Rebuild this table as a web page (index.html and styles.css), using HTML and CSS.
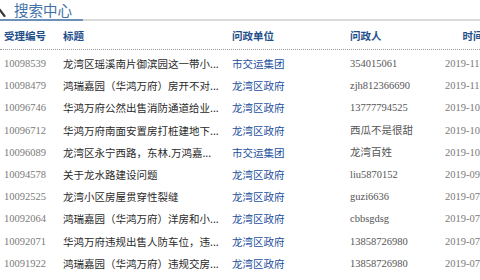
FILE: index.html
```html
<!DOCTYPE html>
<html lang="zh-CN">
<head>
<meta charset="utf-8">
<link rel="stylesheet" href="styles.css">
</head>
<body>
<div class="page">
  <div class="head">
    <svg class="icon" width="6" height="19" viewBox="0 0 6 19"><line x1="-0.5" y1="9.5" x2="4.5" y2="16" stroke="#3a3a3a" stroke-width="2.2" stroke-linecap="round"/></svg>
    <span class="title">搜索中心</span>
  </div>
  <div class="bar"><span class="bar-on"></span></div>
  <div class="table">
    <div class="row th">
      <span>受理编号</span><span>标题</span><span>问政单位</span><span>问政人</span><span class="d">时间</span>
    </div>
    <div class="rows">
    <div class="row"><span class="no">10098539</span><span class="t">龙湾区瑶溪南片御滨园这一带小...</span><span class="u">市交运集团</span><span class="p">354015061</span><span class="d">2019-11-20</span></div>
    <div class="row"><span class="no">10098479</span><span class="t">鸿瑞嘉园（华鸿万府）房开不对...</span><span class="u">龙湾区政府</span><span class="p">zjh812366690</span><span class="d">2019-11-18</span></div>
    <div class="row"><span class="no">10096746</span><span class="t">华鸿万府公然出售消防通道给业...</span><span class="u">龙湾区政府</span><span class="p">13777794525</span><span class="d">2019-10-22</span></div>
    <div class="row"><span class="no">10096712</span><span class="t">华鸿万府南面安置房打桩建地下...</span><span class="u">龙湾区政府</span><span class="p">西瓜不是很甜</span><span class="d">2019-10-21</span></div>
    <div class="row"><span class="no">10096089</span><span class="t">龙湾区永宁西路，东林.万鸿嘉...</span><span class="u">市交运集团</span><span class="p">龙湾百姓</span><span class="d">2019-10-12</span></div>
    <div class="row"><span class="no">10094578</span><span class="t">关于龙水路建设问题</span><span class="u">龙湾区政府</span><span class="p">liu5870152</span><span class="d">2019-09-16</span></div>
    <div class="row"><span class="no">10092525</span><span class="t">龙湾小区房屋贯穿性裂缝</span><span class="u">龙湾区政府</span><span class="p">guzi6636</span><span class="d">2019-07-30</span></div>
    <div class="row"><span class="no">10092064</span><span class="t">鸿瑞嘉园（华鸿万府）洋房和小...</span><span class="u">龙湾区政府</span><span class="p">cbbsgdsg</span><span class="d">2019-07-22</span></div>
    <div class="row"><span class="no">10092071</span><span class="t">华鸿万府违规出售人防车位，违...</span><span class="u">龙湾区政府</span><span class="p">13858726980</span><span class="d">2019-07-22</span></div>
    <div class="row"><span class="no">10091922</span><span class="t">鸿瑞嘉园（华鸿万府）违规交房...</span><span class="u">龙湾区政府</span><span class="p">13858726980</span><span class="d">2019-07-19</span></div>
    </div>
  </div>
</div>
</body>
</html>
```
FILE: styles.css
```css
html, body {
  margin: 0;
  padding: 0;
  background: #fff;
  overflow: hidden;
}
.page {
  width: 480px;
  height: 280px;
  overflow: hidden;
  font-family: "Liberation Serif", "Noto Sans CJK SC", serif;
}
.head {
  height: 19px;
  display: flex;
  align-items: flex-start;
  white-space: nowrap;
}
.icon {
  flex: none;
}
.title {
  margin-left: 8px;
  font-family: "Noto Sans CJK SC", sans-serif;
  font-size: 14.5px;
  line-height: 19px;
  color: #3f70a8;
}
.bar {
  height: 2px;
  background: #dadada;
  display: flex;
}
.bar-on {
  width: 83px;
  background: #6f91b8;
}
.table {
  width: 560px;
  padding-top: 1px;
}
.rows {
  padding-top: 3px;
}
.row {
  display: grid;
  grid-template-columns: 59px 169px 118px 95px 56px;
  padding-left: 4px;
  height: 22.2px;
  line-height: 22px;
  font-size: 10.5px;
  white-space: nowrap;
}
.row span {
  overflow: hidden;
}
.th {
  height: 28px;
  line-height: 22px;
  padding-top: 3px;
  box-sizing: border-box;
  border-bottom: 1px dotted #9a9a9a;
  font-family: "Noto Sans CJK SC", sans-serif;
  font-weight: bold;
  color: #1f4f8a;
}
.th .d {
  text-align: center;
  color: #1f4f8a;
}
.no {
  color: #7a7a7a;
}
.t {
  color: #2a2a2a;
  font-family: "Noto Sans CJK SC", sans-serif;
}
.u {
  color: #1d4f9c;
  font-family: "Noto Sans CJK SC", sans-serif;
}
.p {
  color: #555;
}
.d {
  color: #7a7a7a;
}
```
